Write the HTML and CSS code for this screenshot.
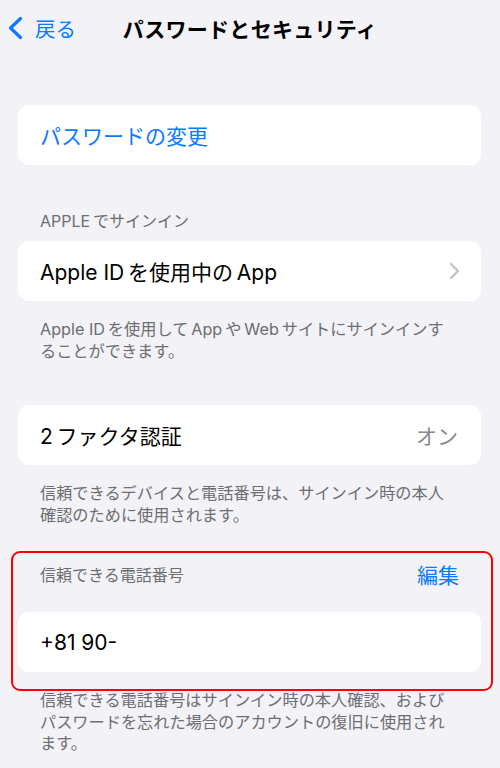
FILE: index.html
```html
<!DOCTYPE html>
<html lang="ja">
	<head>
		<meta charset="utf-8">
		<title>パスワードとセキュリティ</title>
		<link rel="stylesheet" href="styles.css">
	</head>
	<body>
		<div class="navBar">
			<a class="backButton" href="#">
				<svg class="backChevron" width="17" height="24" viewBox="0 0 17 24">
					<path d="M13.5 2.5 L3.5 12 L13.5 21.5" fill="none" stroke="#0a7aff" stroke-width="3.2" stroke-linecap="round" stroke-linejoin="round"/>
				</svg>
				<span>戻る</span>
			</a>
			<div class="navTitle">パスワードとセキュリティ</div>
			<div></div>
		</div>

		<div class="card cardFirst">
			<span class="linkText">パスワードの変更</span>
		</div>

		<div class="sectionHeader">APPLE&#8201;でサインイン</div>
		<div class="card">
			<span>Apple ID&#8201;を使用中の&#8201;App</span>
			<svg class="rowChevron" width="11" height="18" viewBox="0 0 11 18">
				<path d="M2 2 L9 9 L2 16" fill="none" stroke="#c4c4c7" stroke-width="2.4" stroke-linecap="round" stroke-linejoin="round"/>
			</svg>
		</div>
		<div class="sectionFooter">Apple ID&#8201;を使用して&#8201;App&#8201;や&#8201;Web&#8201;サイトにサインインすることができます。</div>

		<div class="card cardSpaced">
			<span>2&#8201;ファクタ認証</span>
			<span class="valueText">オン</span>
		</div>
		<div class="sectionFooter">信頼できるデバイスと電話番号は、サインイン時の本人確認のために使用されます。</div>

		<div class="phoneSection">
			<div class="phoneHeader">
				<span class="sectionHeaderText">信頼できる電話番号</span>
				<a class="editLink" href="#">編集</a>
			</div>
			<div class="card">
				<span class="phoneNumber">+81 90-</span>
			</div>
			<div class="highlightFrame"></div>
		</div>
		<div class="sectionFooter">信頼できる電話番号はサインイン時の本人確認、およびパスワードを忘れた場合のアカウントの復旧に使用されます。</div>
	</body>
</html>
```

FILE: styles.css
```css
body {
	margin: 0;
	background-color: #f2f2f7;
	font-family: "Inter", "Noto Sans CJK JP", sans-serif;
	color: #000000;
	width: 500px;
	height: 768px;
	overflow: hidden;
}

a {
	text-decoration: none;
}

.navBar {
	display: grid;
	grid-template-columns: 1fr auto 1fr;
	align-items: center;
	height: 56px;
}

.backButton {
	display: flex;
	align-items: center;
	gap: 11px;
	padding-left: 7px;
	color: #0a7aff;
	font-size: 20.5px;
}

.navTitle {
	font-size: 21px;
	font-weight: 700;
	letter-spacing: 0.3px;
}

.card {
	display: flex;
	align-items: center;
	justify-content: space-between;
	height: 60px;
	margin: 0 19px 0 18px;
	padding: 0 22px;
	background-color: #ffffff;
	border-radius: 11px;
	font-size: 21px;
	box-sizing: border-box;
}

.cardFirst {
	margin-top: 49px;
}

.cardSpaced {
	margin-top: 43px;
}

.linkText {
	color: #0a7aff;
}

.rowChevron {
	margin-right: -1px;
}

.valueText {
	color: #8a8a8e;
	margin-right: 1px;
}

.sectionHeader {
	margin: 45px 0 9px 0;
	padding-left: 40px;
	font-size: 16px;
	line-height: 22px;
	color: #6d6d72;
}

.sectionFooter {
	margin-top: 18px;
	padding: 0 44px 0 40px;
	font-size: 16.2px;
	line-height: 21.5px;
	color: #6d6d72;
}

.phoneSection {
	position: relative;
	margin-top: 36px;
}

.phoneHeader {
	display: flex;
	align-items: center;
	justify-content: space-between;
	height: 24px;
	padding: 0 41px 26px 40px;
}

.sectionHeaderText {
	font-size: 16px;
	color: #6d6d72;
}

.editLink {
	color: #0a7aff;
	font-size: 21px;
}

.highlightFrame {
	position: absolute;
	top: -11px;
	left: 11px;
	right: 7px;
	bottom: -19px;
	border: 2px solid #ff0000;
	border-radius: 9px;
}
```
